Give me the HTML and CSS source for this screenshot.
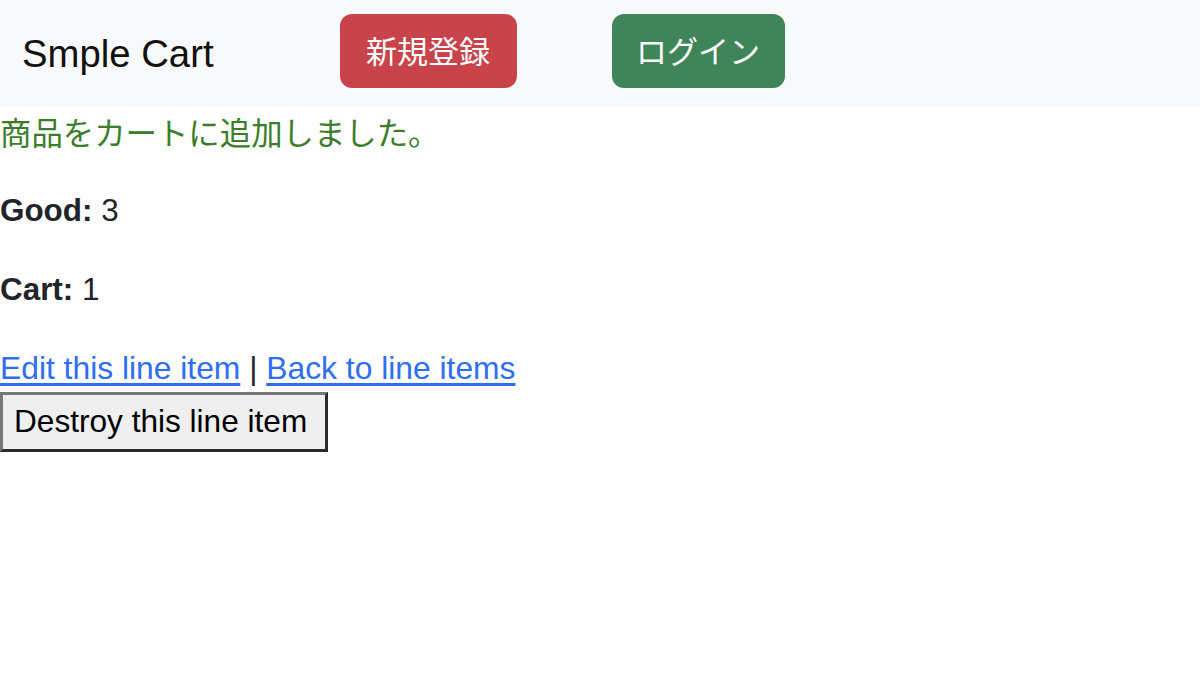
FILE: index.html
```html
<!DOCTYPE html>
<html lang="ja">
<head>
<meta charset="utf-8">
<title>Smple Cart</title>
<link rel="stylesheet" href="styles.css">
</head>
<body>
<nav class="navbar">
  <a class="brand" href="#">Smple Cart</a>
  <a class="btn btn-danger" href="#">新規登録</a>
  <a class="btn btn-success" href="#">ログイン</a>
</nav>
<main class="content">
  <p class="notice">商品をカートに追加しました。</p>
  <p><strong>Good:</strong> 3</p>
  <p><strong>Cart:</strong> 1</p>
  <div class="links"><a href="#">Edit this line item</a> | <a href="#">Back to line items</a></div>
  <form class="destroy-form"><button type="button" class="destroy">Destroy this line item</button></form>
</main>
</body>
</html>
```
FILE: styles.css
```css
html, body {
  margin: 0;
  padding: 0;
  background: #fff;
}
body {
  font-family: "Liberation Sans", "Noto Sans CJK JP", sans-serif;
  font-size: 31.4px;
  line-height: 1.5;
  color: #212529;
}
.navbar {
  display: flex;
  align-items: center;
  height: 107px;
  padding: 0 22px;
  background: #f8f9fa;
  box-sizing: border-box;
}
.brand {
  font-size: 38.3px;
  color: #111;
  text-decoration: none;
  margin-right: 126px;
}
.btn {
  display: inline-flex;
  align-items: center;
  justify-content: center;
  height: 74px;
  padding: 0;
  margin-bottom: 6px;
  box-sizing: border-box;
  border-radius: 12px;
  color: #fff;
  text-decoration: none;
  white-space: nowrap;
  font-size: 31px;
  font-family: "Noto Sans CJK JP", sans-serif;
}
.btn-danger {
  background: #c9434b;
  width: 177px;
  margin-right: 95px;
}
.btn-success {
  background: #40855a;
  width: 173px;
}
.content {
  padding-top: 1px;
}
.content p {
  margin: 0 0 32px;
}
.notice {
  color: #3b7d2b;
  font-family: "Noto Sans CJK JP", sans-serif;
}
.content strong {
  font-weight: bold;
}
.links {
  font-size: 31.8px;
  line-height: 47px;
}
.links a {
  color: #2f6ef0;
  text-decoration: underline;
  text-underline-offset: 4px;
}
.destroy-form {
  margin: 0;
}
.destroy {
  font-family: "Liberation Sans", sans-serif;
  font-size: 31.6px;
  line-height: 1.2;
  color: #000;
  background: #efefef;
  padding: 8px 18px 8px 11px;
  border-width: 3px;
  border-style: solid;
  border-color: #777 #2a2a2a #2a2a2a #777;
  margin: 0;
}
```
